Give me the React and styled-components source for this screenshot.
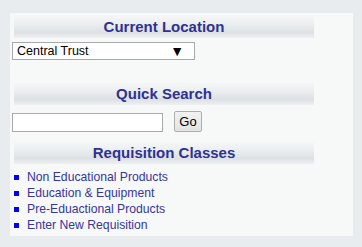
import React from "react";
import styled, { createGlobalStyle } from "styled-components";

const GlobalStyle = createGlobalStyle`
  body {
    margin: 0;
    background: #e8ecee;
    font-family: "Liberation Sans", Arial, sans-serif;
  }
`;

const Page = styled.div`
  padding: 13px 9px 11px 10px;
  background: #e8ecee;
`;

const Panel = styled.div`
  width: 343px;
  height: 223px;
  box-sizing: border-box;
  padding-top: 3px;
  background: #f7f8f8;
`;

const SectionBar = styled.div`
  width: 300px;
  height: 22px;
  box-sizing: border-box;
  padding-bottom: 1px;
  margin: ${(p) => p.$top || 0}px 0 0 4px;
  display: flex;
  align-items: center;
  justify-content: center;
  background: linear-gradient(#f4f6f7 0%, #eceff0 35%, #dde1e4 75%, #eef1f2 100%);
  color: #2e3192;
  font-size: 15px;
  font-weight: bold;
`;

const SelectBox = styled.div`
  width: 183px;
  height: 18px;
  margin: 4px 0 0 2px;
  box-sizing: border-box;
  border: 1px solid #a9a9a9;
  background: #fff;
  display: flex;
  align-items: center;
  justify-content: space-between;
  padding: 0 10px 0 4px;
  font-size: 12.5px;
  color: #000;
`;

const Arrow = styled.span`
  font-size: 14px;
  line-height: 1;
`;

const SearchRow = styled.div`
  display: flex;
  align-items: flex-end;
  gap: 11px;
  margin: 6px 0 0 2px;
`;

const SearchInput = styled.input`
  width: 151px;
  height: 19px;
  box-sizing: border-box;
  border: 1px solid #a9a9a9;
  background: #fff;
  padding: 0 3px;
  margin: 0;
  font-family: inherit;
`;

const GoButton = styled.button`
  width: 28px;
  height: 21px;
  box-sizing: border-box;
  padding: 0;
  margin: 0;
  border: 1px solid #adadad;
  border-radius: 2px;
  background: linear-gradient(#f2f2f2, #e3e3e3);
  font-family: inherit;
  font-size: 13px;
  color: #000;
`;

const LinkList = styled.ul`
  list-style: none;
  margin: 5px 0 0 0;
  padding: 0;
`;

const LinkItem = styled.li`
  display: flex;
  align-items: center;
  height: 16px;
  padding-left: 4px;
  font-size: 12.2px;
  color: #36369c;
  &::before {
    content: "";
    width: 5px;
    height: 5px;
    margin: 1px 8px 0 0;
    background: #0000ff;
  }
`;

const links = [
  "Non Educational Products",
  "Education & Equipment",
  "Pre-Eduactional Products",
  "Enter New Requisition",
];

export default function App() {
  return (
    <Page>
      <GlobalStyle />
      <Panel>
        <SectionBar>Current Location</SectionBar>
        <SelectBox>
          <span>Central Trust</span>
          <Arrow>▼</Arrow>
        </SelectBox>
        <SectionBar $top={23}>Quick Search</SectionBar>
        <SearchRow>
          <SearchInput type="text" />
          <GoButton>Go</GoButton>
        </SearchRow>
        <SectionBar $top={10}>Requisition Classes</SectionBar>
        <LinkList>
          {links.map((l) => (
            <LinkItem key={l}>{l}</LinkItem>
          ))}
        </LinkList>
      </Panel>
    </Page>
  );
}
